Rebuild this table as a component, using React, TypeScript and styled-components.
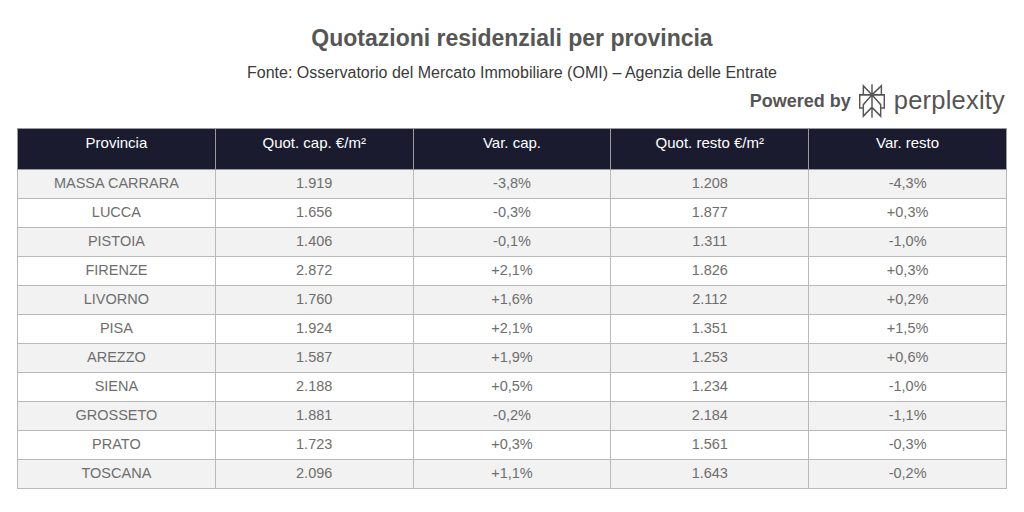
import styled, { createGlobalStyle } from 'styled-components';

const GlobalStyle = createGlobalStyle`
  html, body {
    margin: 0;
    padding: 0;
    background: #fff;
    font-family: 'Liberation Sans', Arial, sans-serif;
  }
`;

const Page = styled.div`
  width: 1024px;
  height: 512px;
  box-sizing: border-box;
  padding: 24px 17px 0 17px;
  display: flex;
  flex-direction: column;
  align-items: stretch;
`;

const Title = styled.h1`
  margin: 0;
  text-align: center;
  font-size: 23px;
  line-height: 28px;
  font-weight: bold;
  color: #565656;
`;

const Subtitle = styled.div`
  margin-top: 11px;
  text-align: center;
  font-size: 16px;
  line-height: 20px;
  color: #3a3a3a;
`;

const Powered = styled.div`
  display: flex;
  align-items: center;
  justify-content: flex-end;
  gap: 6px;
  height: 34px;
  margin-top: 1px;
  margin-right: 2px;
  color: #555;
`;

const PoweredText = styled.span`
  font-size: 18px;
  font-weight: bold;
`;

const Brand = styled.span`
  font-size: 25.5px;
  letter-spacing: 0.2px;
  margin-left: 1px;
  margin-bottom: 2px;
`;

const Table = styled.table`
  margin-top: 10px;
  width: 990px;
  border-collapse: collapse;
  table-layout: fixed;
`;

const Th = styled.th`
  background: #1b1b30;
  color: #fff;
  font-weight: normal;
  font-size: 15px;
  height: 41px;
  padding: 5px 0 0 0;
  vertical-align: top;
  text-align: center;
  border: 1px solid #9a9a9a;
  box-sizing: border-box;
`;

const Tr = styled.tr<{ $alt: boolean }>`
  background: ${(p) => (p.$alt ? '#f2f2f2' : '#fff')};
`;

const Td = styled.td`
  height: 29px;
  padding: 0 0 2px 0;
  box-sizing: border-box;
  text-align: center;
  font-size: 14.5px;
  color: #6e6e6e;
  border: 1px solid #b9b9b9;
`;

const Logo = () => (
  <svg width="30" height="34" viewBox="0 0 24 24" preserveAspectRatio="none" fill="#555">
    <path d="M22.3977 7.0896h-2.3106V.0676l-7.5094 6.3542V.1577h-1.1554v6.1966L4.4904 0v7.0896H1.6023v10.3976h2.8882V24l6.932-6.3591v6.2005h1.1554v-6.0469l6.9318 6.1807v-6.4879h2.8882V7.0896zm-3.4657-4.531v4.531h-5.355l5.355-4.531zm-13.2862.0676 4.8691 4.4634H5.6458V2.6262zM2.7576 16.332V8.245h7.8476l-6.1149 6.1147v1.9723H2.7576zm2.8882 5.0404v-3.8852h.0001v-2.6488l5.7763-5.7764v7.0111l-5.7764 5.2993zm12.7086.0248-5.7766-5.1509V9.0618l5.7766 5.7766v6.5588zm2.8882-5.0652h-1.733v-1.9723L13.3948 8.245h7.8478v8.087z" />
  </svg>
);

const headers = ['Provincia', 'Quot. cap. €/m²', 'Var. cap.', 'Quot. resto €/m²', 'Var. resto'];

const rows = [
  ['MASSA CARRARA', '1.919', '-3,8%', '1.208', '-4,3%'],
  ['LUCCA', '1.656', '-0,3%', '1.877', '+0,3%'],
  ['PISTOIA', '1.406', '-0,1%', '1.311', '-1,0%'],
  ['FIRENZE', '2.872', '+2,1%', '1.826', '+0,3%'],
  ['LIVORNO', '1.760', '+1,6%', '2.112', '+0,2%'],
  ['PISA', '1.924', '+2,1%', '1.351', '+1,5%'],
  ['AREZZO', '1.587', '+1,9%', '1.253', '+0,6%'],
  ['SIENA', '2.188', '+0,5%', '1.234', '-1,0%'],
  ['GROSSETO', '1.881', '-0,2%', '2.184', '-1,1%'],
  ['PRATO', '1.723', '+0,3%', '1.561', '-0,3%'],
  ['TOSCANA', '2.096', '+1,1%', '1.643', '-0,2%'],
];

export default function App() {
  return (
    <>
      <GlobalStyle />
      <Page>
        <Title>Quotazioni residenziali per provincia</Title>
        <Subtitle>Fonte: Osservatorio del Mercato Immobiliare (OMI) – Agenzia delle Entrate</Subtitle>
        <Powered>
          <PoweredText>Powered by</PoweredText>
          <Logo />
          <Brand>perplexity</Brand>
        </Powered>
        <Table>
          <thead>
            <tr>
              {headers.map((h) => (
                <Th key={h}>{h}</Th>
              ))}
            </tr>
          </thead>
          <tbody>
            {rows.map((r, i) => (
              <Tr key={r[0]} $alt={i % 2 === 0}>
                {r.map((c, j) => (
                  <Td key={j}>{c}</Td>
                ))}
              </Tr>
            ))}
          </tbody>
        </Table>
      </Page>
    </>
  );
}
